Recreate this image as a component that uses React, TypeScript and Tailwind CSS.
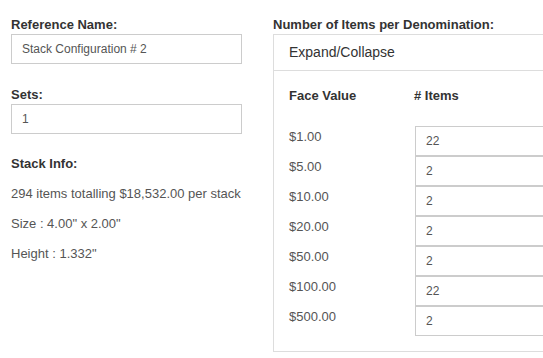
import React from 'react'

const denominations = [
  { face: '$1.00', items: '22' },
  { face: '$5.00', items: '2' },
  { face: '$10.00', items: '2' },
  { face: '$20.00', items: '2' },
  { face: '$50.00', items: '2' },
  { face: '$100.00', items: '22' },
  { face: '$500.00', items: '2' },
]

function Label({ children }: { children: React.ReactNode }) {
  return <div className="block text-[13px] leading-[19px] font-bold text-[#333]">{children}</div>
}

function TextInput({ value }: { value: string }) {
  return (
    <input
      readOnly
      value={value}
      className="block h-[30px] w-full border border-[#ccc] bg-white px-[10px] text-[12px] text-[#555] outline-none"
    />
  )
}

export default function App() {
  return (
    <div className="w-[543px] h-[358px] overflow-hidden bg-white font-['Liberation_Sans',Arial,sans-serif]">
      <div className="flex pl-[11px] pt-[15px] gap-[31px]">
        {/* Left: reference + sets + info */}
        <div className="w-[231px] shrink-0">
          <Label>Reference Name:</Label>
          <TextInput value="Stack Configuration # 2" />

          <div className="mt-[21px]">
            <Label>Sets:</Label>
            <TextInput value="1" />
          </div>

          <div className="mt-[20px]">
            <Label>Stack Info:</Label>
            <div className="mt-[6px] text-[13px] leading-[30px] text-[#555]">
              <div>294 items totalling $18,532.00 per stack</div>
              <div>Size : 4.00" x 2.00"</div>
              <div>Height : 1.332"</div>
            </div>
          </div>
        </div>

        {/* Right: denominations panel */}
        <div className="w-[320px] shrink-0">
          <Label>Number of Items per Denomination:</Label>
          <div className="border border-[#ddd] bg-white">
            <div className="flex h-[36px] items-center border-b border-[#ddd] px-[15px] text-[14px] text-[#333]">
              Expand/Collapse
            </div>
            <div className="px-[15px] pt-[15px] pb-[15px]">
              <div className="grid grid-cols-[126px_1fr] text-[13px] leading-[19px] font-bold text-[#333]">
                <div>Face Value</div>
                <div className="-ml-px"># Items</div>
              </div>
              <div className="mt-[21px]">
                {denominations.map((d) => (
                  <div key={d.face} className="grid grid-cols-[126px_1fr] h-[30px]">
                    <div className="pt-px text-[13px] leading-[19px] text-[#555]">{d.face}</div>
                    <TextInput value={d.items} />
                  </div>
                ))}
              </div>
            </div>
          </div>
        </div>
      </div>
    </div>
  )
}
